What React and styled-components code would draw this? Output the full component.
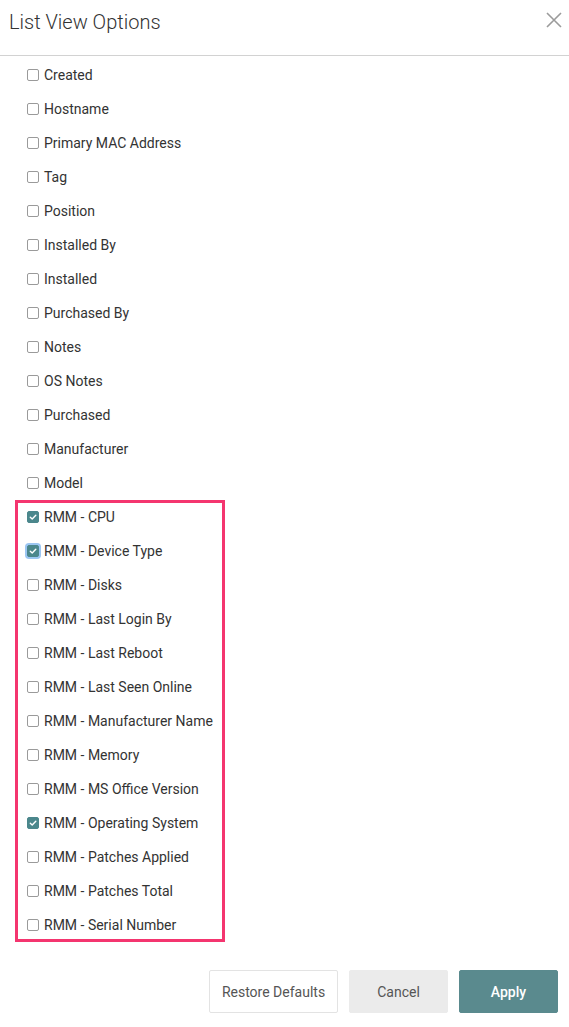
import React from 'react';
import styled, { createGlobalStyle } from 'styled-components';

const GlobalStyle = createGlobalStyle`
  body {
    margin: 0;
    background: #fff;
    font-family: Roboto, "Liberation Sans", sans-serif;
    color: #333;
  }
`;

const Modal = styled.div`
  width: 569px;
  height: 1027px;
  display: flex;
  flex-direction: column;
`;

const Header = styled.div`
  height: 56px;
  border-bottom: 1px solid #d2d2d2;
  display: flex;
  align-items: flex-start;
  justify-content: space-between;
  padding: 0 6px 0 9px;
  box-sizing: border-box;
`;

const Title = styled.h4`
  margin: 10px 0 0;
  font-size: 20px;
  font-weight: 300;
  color: #333;
`;

const Close = styled.button`
  border: 0;
  background: none;
  padding: 0;
  margin-top: 11px;
  width: 18px;
  height: 18px;
  cursor: pointer;
`;

const Body = styled.div`
  padding-top: 2px;
`;

const Group = styled.div`
  margin-left: 15px;
  width: 210px;
  outline: 3px solid #f4356f;
  outline-offset: -3px;
`;

const Row = styled.label`
  height: 34px;
  display: flex;
  align-items: center;
  padding-left: ${(p) => (p.inGroup ? '12px' : '27px')};
  font-size: 14px;
  color: #333;
`;

const Box = styled.span`
  width: 12px;
  height: 12px;
  box-sizing: border-box;
  border-radius: 2px;
  border: 1px solid ${(p) => (p.checked ? '#4b878c' : '#9a9a9a')};
  background: ${(p) => (p.checked ? '#4b878c' : '#fff')};
  margin-right: 5px;
  display: flex;
  align-items: center;
  justify-content: center;
  box-shadow: ${(p) => (p.focused ? '0 0 0 2px #9cc6f2' : 'none')};
`;

const Footer = styled.div`
  display: flex;
  justify-content: flex-end;
  gap: 11px;
  padding: 28px 11px 0 0;
`;

const Button = styled.button`
  height: 43px;
  width: ${(p) => p.w}px;
  box-sizing: border-box;
  border-radius: 2px;
  font-family: Roboto, "Liberation Sans", sans-serif;
  font-size: 14px;
  font-weight: ${(p) => (p.primary ? 500 : 400)};
  color: ${(p) => (p.primary ? '#fff' : '#555')};
  background: ${(p) => (p.primary ? '#5a8a8e' : p.grey ? '#ebebeb' : '#fff')};
  border: 1px solid ${(p) => (p.primary ? '#5a8a8e' : p.grey ? '#ebebeb' : '#e3e3e3')};
`;

const topItems = [
  'Created', 'Hostname', 'Primary MAC Address', 'Tag', 'Position', 'Installed By',
  'Installed', 'Purchased By', 'Notes', 'OS Notes', 'Purchased', 'Manufacturer', 'Model',
];

const rmmItems = [
  { label: 'RMM - CPU', checked: true },
  { label: 'RMM - Device Type', checked: true, focused: true },
  { label: 'RMM - Disks' },
  { label: 'RMM - Last Login By' },
  { label: 'RMM - Last Reboot' },
  { label: 'RMM - Last Seen Online' },
  { label: 'RMM - Manufacturer Name' },
  { label: 'RMM - Memory' },
  { label: 'RMM - MS Office Version' },
  { label: 'RMM - Operating System', checked: true },
  { label: 'RMM - Patches Applied' },
  { label: 'RMM - Patches Total' },
  { label: 'RMM - Serial Number' },
];

const Check = ({ checked, focused }) => (
  <Box checked={checked} focused={focused}>
    {checked && (
      <svg width="8" height="8" viewBox="0 0 8 8">
        <path d="M1.3 4.2 L3.2 6 L6.8 2.2" fill="none" stroke="#fff" strokeWidth="1.4" strokeLinecap="round" strokeLinejoin="round" />
      </svg>
    )}
  </Box>
);

const App = () => (
  <Modal>
    <GlobalStyle />
    <Header>
      <Title>List View Options</Title>
      <Close aria-label="Close">
        <svg width="18" height="18" viewBox="0 0 18 18">
          <path d="M2 2 L16 16 M16 2 L2 16" stroke="#9b9b9b" strokeWidth="1.6" fill="none" />
        </svg>
      </Close>
    </Header>
    <Body>
      {topItems.map((t) => (
        <Row key={t}>
          <Check />
          {t}
        </Row>
      ))}
      <Group>
        {rmmItems.map((it) => (
          <Row key={it.label} inGroup>
            <Check checked={it.checked} focused={it.focused} />
            {it.label}
          </Row>
        ))}
      </Group>
    </Body>
    <Footer>
      <Button w={129}>Restore Defaults</Button>
      <Button w={99} grey>Cancel</Button>
      <Button w={99} primary>Apply</Button>
    </Footer>
  </Modal>
);

export default App;
